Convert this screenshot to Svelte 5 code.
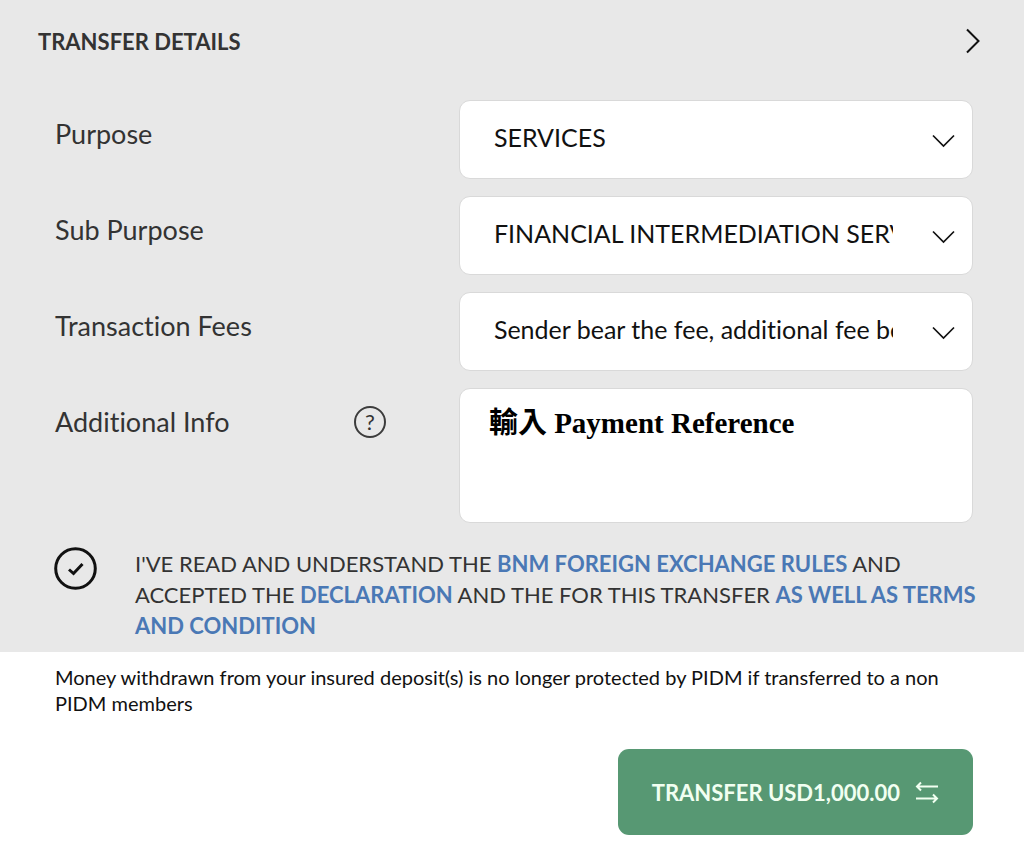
<script>
    let purpose = 'SERVICES';
    let subPurpose = 'FINANCIAL INTERMEDIATION SERVICES';
    let fees = 'Sender bear the fee, additional fee bear by recipient';
    let additionalInfo = '輸入 Payment Reference';
    let accepted = true;
    let amount = 1000;

    $: selects = [
        { id: 'purpose', label: 'Purpose', value: purpose },
        { id: 'sub-purpose', label: 'Sub Purpose', value: subPurpose },
        { id: 'fees', label: 'Transaction Fees', value: fees }
    ];

    const formatAmount = (value) => {
        return value.toLocaleString('en-US', { minimumFractionDigits: 2 });
    }
</script>

<form on:submit|preventDefault>
    <section class="details">
        <header>
            <h2>TRANSFER DETAILS</h2>
            <button type="button" class="next" aria-label="Open transfer details">
                <svg width="16" height="28" viewBox="0 0 16 28"><path d="M2 2.5 L13.5 14 L2 25.5" /></svg>
            </button>
        </header>

        <div class="fields">
            {#each selects as field}
                <div class="row">
                    <label for={field.id}>{field.label}</label>
                    <div class="control">
                        <select id={field.id}>
                            <option>{field.value}</option>
                        </select>
                        <svg class="chevron" width="24" height="14" viewBox="0 0 24 14"><path d="M1 1.5 L11.5 12 L22 1.5" /></svg>
                    </div>
                </div>
            {/each}
            <div class="row">
                <div class="label-help">
                    <label for="info">Additional Info</label>
                    <button type="button" class="help" aria-label="Help">?</button>
                </div>
                <textarea id="info" bind:value={additionalInfo}></textarea>
            </div>
        </div>

        <div class="terms">
            <input id="accept" type="checkbox" bind:checked={accepted} aria-labelledby="terms-text" />
            <svg class="tick" width="44" height="44" viewBox="0 0 44 44">
                <circle cx="22.5" cy="21.5" r="19.8" />
                {#if accepted}
                    <path d="M16 22.5 L20.5 26.5 L29.5 17" />
                {/if}
            </svg>
            <p id="terms-text">
                I'VE READ AND UNDERSTAND THE <a href="#rules">BNM FOREIGN EXCHANGE RULES</a> AND ACCEPTED THE
                <a href="#declaration">DECLARATION</a> AND THE FOR THIS TRANSFER <a href="#terms">AS WELL AS TERMS AND CONDITION</a>
            </p>
        </div>
    </section>

    <footer>
        <p>Money withdrawn from your insured deposit(s) is no longer protected by PIDM if transferred to a non PIDM members</p>
        <button class="submit" disabled={!accepted}>
            TRANSFER USD{formatAmount(amount)}
            <svg width="24" height="24" viewBox="0 0 24 24">
                <path d="M23 6.5 H2 M6 2.5 L2 6.5 L6 10.5 M1 18.5 H22 M18 14.5 L22 18.5 L18 22.5" />
            </svg>
        </button>
    </footer>
</form>

<style>
    :global(body) {
        margin: 0;
        background: #fff;
    }

    form, select, button {
        font-family: Lato, "Liberation Sans", sans-serif;
        font-variant-ligatures: none;
    }

    svg {
        fill: none;
        stroke: #111;
        stroke-width: 2;
    }

    button {
        padding: 0;
        border: 0;
        background: none;
        cursor: pointer;
    }

    .details {
        padding-bottom: 11px;
        background: #e8e8e8;
        color: #333;
    }

    header {
        display: flex;
        align-items: center;
        justify-content: space-between;
        height: 82px;
        padding: 0 43px 0 38px;
    }

    h2 {
        margin: 0;
        font-size: 22px;
        font-weight: 700;
    }

    .next {
        display: flex;
    }

    .fields {
        display: grid;
        gap: 17px;
        padding: 18px 51px 0 55px;
    }

    .row {
        display: grid;
        grid-template-columns: 44% 56%;
    }

    label {
        font-size: 27px;
        line-height: 32px;
    }

    .row > label, .label-help {
        padding-top: 18px;
    }

    .label-help {
        display: flex;
        align-items: flex-start;
        justify-content: space-between;
        padding-right: 73px;
    }

    .help {
        width: 32px;
        height: 32px;
        border: 2px solid #3c3c3c;
        border-radius: 50%;
        color: #333;
        font-size: 22px;
        line-height: 26px;
    }

    .control {
        position: relative;
    }

    select, textarea {
        display: block;
        box-sizing: border-box;
        width: 100%;
        border: 1px solid #d9d9d9;
        border-radius: 11px;
        background: #fff;
    }

    select {
        appearance: none;
        height: 79px;
        padding: 0 79px 5px 34px;
        color: #111;
        font-size: 25px;
    }

    .chevron {
        position: absolute;
        top: 34px;
        right: 17px;
        stroke-width: 1.7;
        pointer-events: none;
    }

    textarea {
        height: 135px;
        padding: 18px 29px;
        color: #000;
        font: 700 29px/32px "Liberation Serif", "Noto Sans CJK TC", serif;
        resize: none;
    }

    .terms {
        position: relative;
        display: flex;
        gap: 38px;
        padding: 24px 32px 0 53px;
    }

    .terms input {
        flex: none;
        width: 44px;
        height: 44px;
        margin: 0;
        opacity: 0;
    }

    .tick {
        position: absolute;
        top: 24px;
        left: 53px;
        stroke-width: 3;
        pointer-events: none;
    }

    p {
        margin: 0;
    }

    .terms p {
        padding-top: 1px;
        font-size: 22px;
        line-height: 31px;
    }

    a {
        color: #4a78b5;
        font-weight: 700;
        text-decoration: none;
    }

    footer {
        display: flex;
        flex-direction: column;
        gap: 33px;
        padding: 12px 51px 11px 55px;
        color: #111;
        font-size: 20px;
        line-height: 26px;
    }

    .submit {
        display: flex;
        align-items: center;
        align-self: flex-end;
        gap: 15px;
        height: 86px;
        padding: 0 34px;
        border-radius: 11px;
        background: #579873;
        color: #f1fff1;
        font-size: 22px;
        font-weight: 700;
    }

    .submit svg {
        stroke: #f1fff1;
    }
</style>
